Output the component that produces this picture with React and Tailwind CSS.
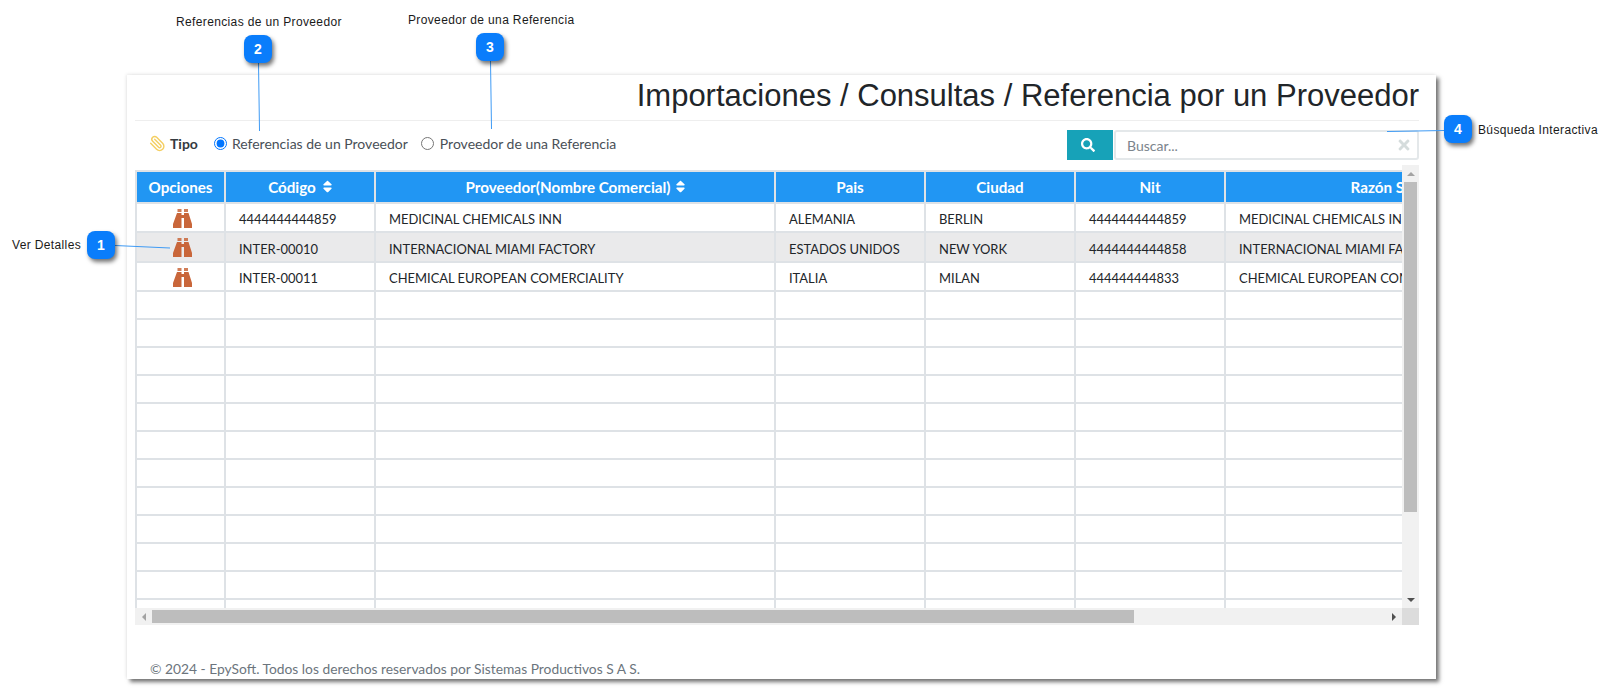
import React from 'react';
import { FaSearch, FaSort, FaTimes } from 'react-icons/fa';
import { Paperclip } from 'lucide-react';

const rows = [
  { codigo: '4444444444859', nombre: 'MEDICINAL CHEMICALS INN', pais: 'ALEMANIA', ciudad: 'BERLIN', nit: '4444444444859', h: 'h-[29px]' },
  { codigo: 'INTER-00010', nombre: 'INTERNACIONAL MIAMI FACTORY', pais: 'ESTADOS UNIDOS', ciudad: 'NEW YORK', nit: '4444444444858', h: 'h-[30px]', hover: true },
  { codigo: 'INTER-00011', nombre: 'CHEMICAL EUROPEAN COMERCIALITY', pais: 'ITALIA', ciudad: 'MILAN', nit: '444444444833', h: 'h-[29px]' },
];

const emptyRows = Array.from({ length: 12 }, (_, i) => i);

const th = 'border-2 border-[#dee2e6] bg-[#2196f3] text-white font-bold text-[15.2px] text-center p-0 h-[32px]';
const td = 'border-2 border-[#dee2e6] pl-[13px] pr-0 pt-[5px] pb-0 text-[12.95px] text-[#212529] whitespace-nowrap overflow-hidden';

const Binoculars = () => (
  <svg width="19" height="19" viewBox="0 0 19 19" className="ml-[36px] mt-[1px] block" fill="#c9663a">
    <path d="M4.5 0h4v3h-4zM11 0h4v3h-4z" opacity="0.85" />
    <path d="M4 4h4.5v2h2.5V4h4.5L19 15v4h-8V9H8.5v10H0v-4z" />
  </svg>
);

const Callout = ({ n, className }) => (
  <div className={`absolute w-[28px] h-[28px] rounded-[8px] bg-[#0a7dfb] text-white flex items-center justify-center text-[14px] font-bold font-['Liberation_Sans',sans-serif] shadow-[2px_3px_4px_rgba(0,0,0,0.55)] ${className}`}>
    {n}
  </div>
);

const Label = ({ children, className }) => (
  <span className={`absolute text-[12px] leading-[14px] tracking-[0.36px] text-[#1a1a1a] whitespace-nowrap font-['Liberation_Sans',sans-serif] ${className}`}>
    {children}
  </span>
);

const App = () => {
  return (
    <div className="relative w-[1617px] h-[688px] bg-white overflow-hidden font-['Lato',sans-serif]">
      <div className="ml-[127px] pt-[75px]">
        <div className="w-[1309px] h-[604px] bg-white pl-[8px] pr-[17px] flex flex-col shadow-[3px_3px_4px_rgba(0,0,0,0.55),-1px_-1px_3px_rgba(0,0,0,0.08)]">
          <div className="h-[46px] border-b border-[#eeeeee] flex items-start justify-end">
            <h1 className="mt-[3px] text-[31px] leading-[36px] text-[#212529] font-['Liberation_Sans',sans-serif]">
              Importaciones / Consultas / Referencia por un Proveedor
            </h1>
          </div>

          <div className="h-[44px] flex items-start justify-between">
            <div className="flex items-center pl-[14px] pt-[11px]">
              <Paperclip size={17} strokeWidth={2} className="text-[#f4cf63] -scale-x-100" />
              <span className="ml-[4px] text-[14px] font-bold text-[#343a40] mr-[16px] mt-[1px]">Tipo</span>
              <label className="flex items-center gap-[5px] text-[14px] text-[#495057] mr-[13px]">
                <input type="radio" name="tipo" defaultChecked />
                Referencias de un Proveedor
              </label>
              <label className="flex items-center gap-[6px] text-[14px] text-[#495057]">
                <input type="radio" name="tipo" />
                Proveedor de una Referencia
              </label>
            </div>
            <div className="flex mt-[9px] h-[30px]">
              <div className="w-[46px] bg-[#17a2b8] flex items-center justify-center text-white pr-[5px]">
                <FaSearch size={14} />
              </div>
              <div className="ml-[1px] w-[305px] border-2 border-[#e4e8ea] rounded-[3px] flex items-center justify-between pl-[11px] pr-[5px]">
                <span className="text-[14px] text-[#7b848c]">Buscar...</span>
                <FaTimes size={16} className="text-[#d5dcdc]" />
              </div>
            </div>
          </div>

          <div className="flex h-[443px]">
            <div className="w-[1267px] overflow-hidden pt-[5px]">
              <table className="table-fixed border-collapse w-[1425px]">
                <colgroup>
                  <col className="w-[89px]" />
                  <col className="w-[150px]" />
                  <col className="w-[400px]" />
                  <col className="w-[150px]" />
                  <col className="w-[150px]" />
                  <col className="w-[150px]" />
                  <col className="w-[336px]" />
                </colgroup>
                <thead>
                  <tr>
                    <th className={th}>Opciones</th>
                    <th className={th}>
                      <span className="inline-flex items-center gap-[4px] pl-[3px]">Código <FaSort size={15} /></span>
                    </th>
                    <th className={th}>
                      <span className="inline-flex items-center gap-[3px] pl-[4px]">Proveedor(Nombre Comercial) <FaSort size={15} /></span>
                    </th>
                    <th className={th}>Pais</th>
                    <th className={th}>Ciudad</th>
                    <th className={th}>Nit</th>
                    <th className={th}>Razón Social</th>
                  </tr>
                </thead>
                <tbody>
                  {rows.map(r => (
                    <tr key={r.codigo} className={`${r.h} ${r.hover ? 'bg-[#eaeaeb]' : ''}`}>
                      <td className="border-2 border-[#dee2e6] p-0">
                        <Binoculars />
                      </td>
                      <td className={td}>{r.codigo}</td>
                      <td className={td}>{r.nombre}</td>
                      <td className={td}>{r.pais}</td>
                      <td className={td}>{r.ciudad}</td>
                      <td className={td}>{r.nit}</td>
                      <td className={td}>{r.nombre}</td>
                    </tr>
                  ))}
                  {emptyRows.map(i => (
                    <tr key={i} className="h-[28px]">
                      <td className={td}></td>
                      <td className={td}></td>
                      <td className={td}></td>
                      <td className={td}></td>
                      <td className={td}></td>
                      <td className={td}></td>
                      <td className={td}></td>
                    </tr>
                  ))}
                </tbody>
              </table>
            </div>

            <div className="w-[17px] bg-[#f1f1f1] flex flex-col items-center">
              <div className="h-[17px] flex items-center justify-center">
                <div className="w-0 h-0 border-x-[4px] border-x-transparent border-b-[4px] border-b-[#a3a3a3]" />
              </div>
              <div className="w-[13px] h-[330px] bg-[#bdbdbd]" />
              <div className="mt-auto h-[17px] flex items-center justify-center">
                <div className="w-0 h-0 border-x-[4px] border-x-transparent border-t-[4px] border-t-[#505050]" />
              </div>
            </div>
          </div>

          <div className="flex h-[17px]">
            <div className="w-[1267px] bg-[#f1f1f1] flex items-center">
              <div className="w-[17px] flex justify-center">
                <div className="w-0 h-0 border-y-[4px] border-y-transparent border-r-[4px] border-r-[#a3a3a3]" />
              </div>
              <div className="w-[982px] h-[13px] bg-[#bdbdbd]" />
              <div className="ml-auto w-[17px] flex justify-center">
                <div className="w-0 h-0 border-y-[4px] border-y-transparent border-l-[4px] border-l-[#505050]" />
              </div>
            </div>
            <div className="w-[17px] bg-[#dcdcdc]" />
          </div>

          <p className="mt-[35px] ml-[15px] text-[13.8px] leading-[18px] text-[#6c757d] whitespace-nowrap">
            © 2024 - EpySoft. Todos los derechos reservados por Sistemas Productivos S A S.
          </p>
        </div>
      </div>

      <svg className="absolute left-0 top-0 pointer-events-none" width="1617" height="688">
        <g stroke="#3f9bf5" strokeWidth="1" fill="none">
          <line x1="115" y1="245.5" x2="170" y2="248" />
          <line x1="258.5" y1="63" x2="259.5" y2="131" />
          <line x1="490.5" y1="61" x2="491.5" y2="129" />
          <line x1="1444" y1="130.5" x2="1387" y2="131.5" />
        </g>
      </svg>

      <Callout n="1" className="left-[87px] top-[231px]" />
      <Callout n="2" className="left-[244px] top-[35px]" />
      <Callout n="3" className="left-[476px] top-[33px]" />
      <Callout n="4" className="left-[1444px] top-[115px]" />

      <Label className="left-[12px] top-[238px]">Ver Detalles</Label>
      <Label className="left-[176px] top-[15px]">Referencias de un Proveedor</Label>
      <Label className="left-[408px] top-[13px]">Proveedor de una Referencia</Label>
      <Label className="left-[1478px] top-[123px]">Búsqueda Interactiva</Label>
    </div>
  );
};

export default App;
